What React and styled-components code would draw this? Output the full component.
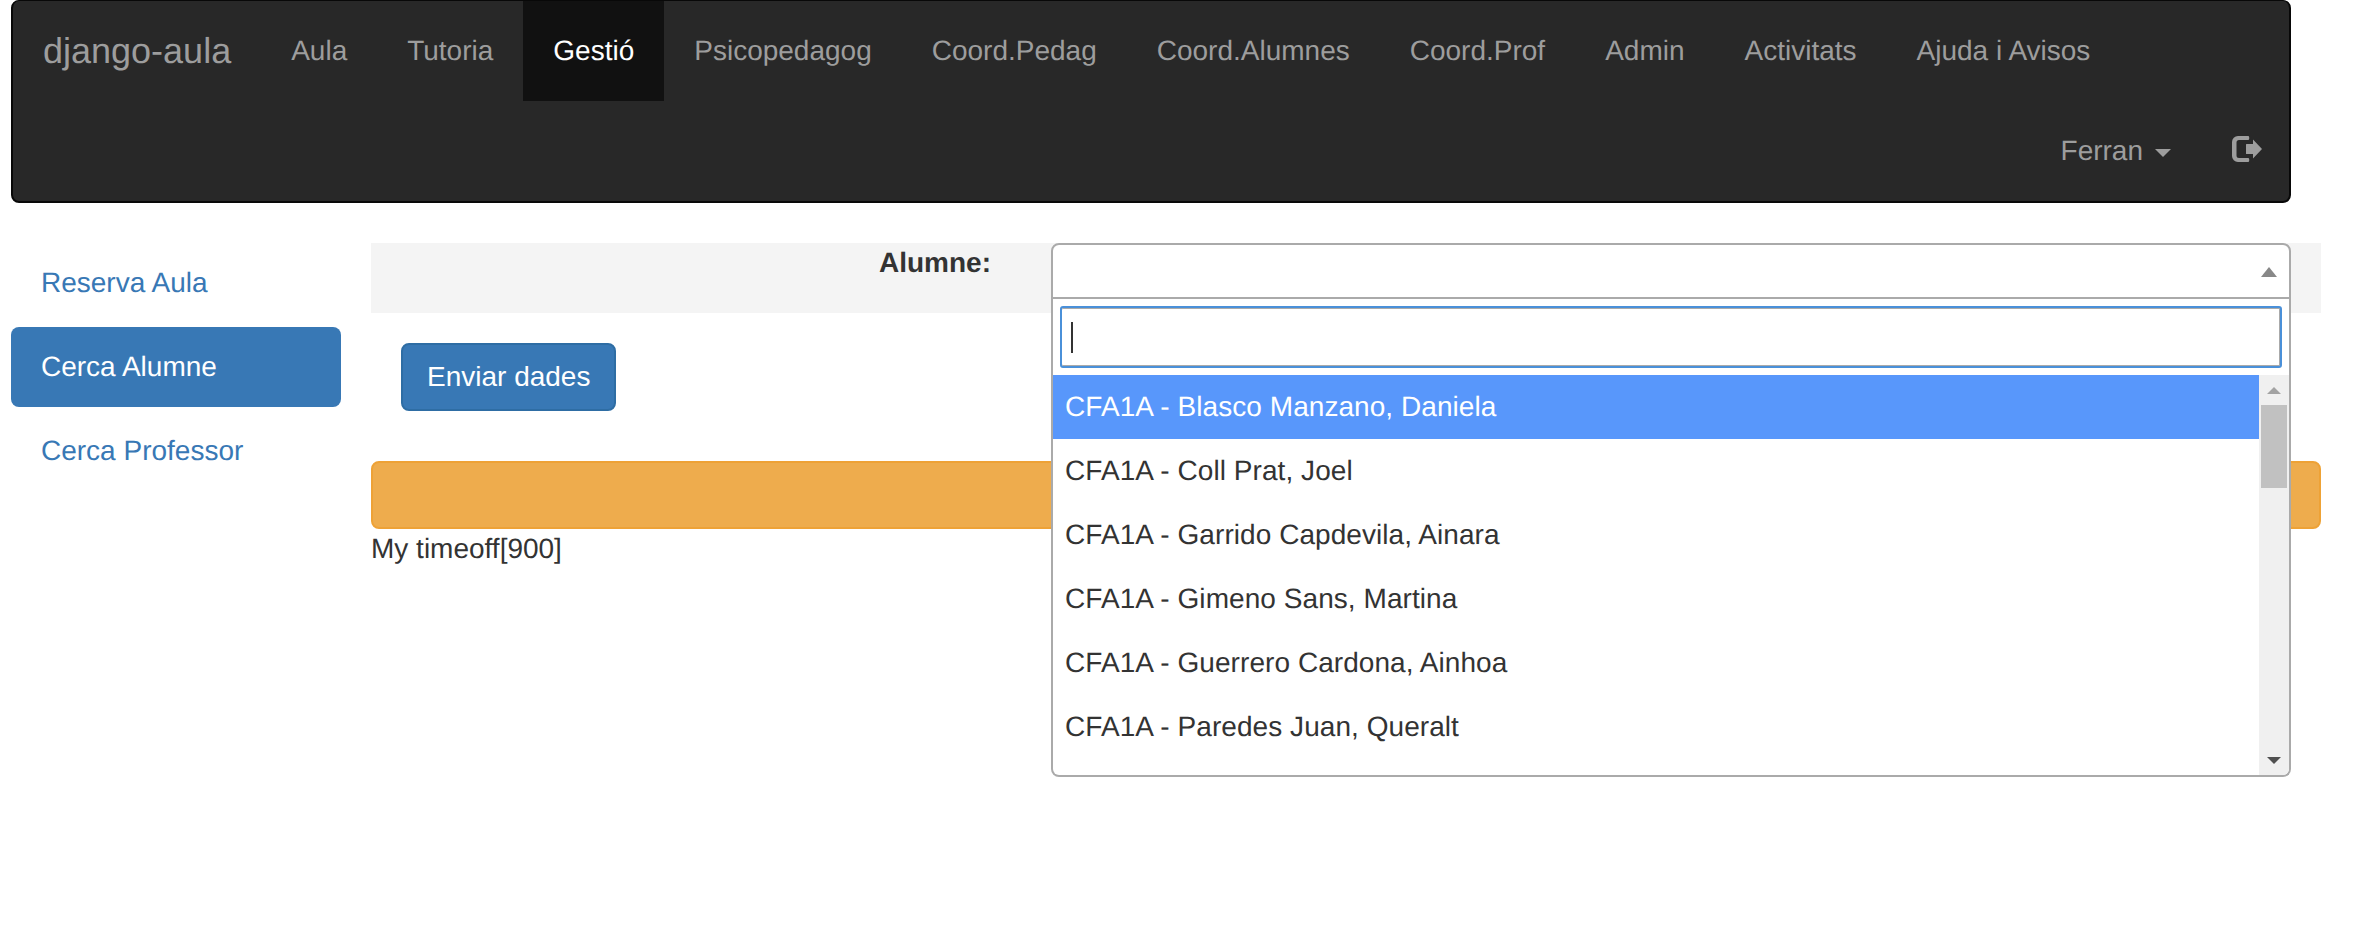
import React from "react";
import styled, { createGlobalStyle } from "styled-components";

const menu = ["Aula", "Tutoria", "Gestió", "Psicopedagog", "Coord.Pedag", "Coord.Alumnes", "Coord.Prof", "Admin", "Activitats", "Ajuda i Avisos"];
const sideLinks = ["Reserva Aula", "Cerca Alumne", "Cerca Professor"];
const students = [
  "CFA1A - Blasco Manzano, Daniela",
  "CFA1A - Coll Prat, Joel",
  "CFA1A - Garrido Capdevila, Ainara",
  "CFA1A - Gimeno Sans, Martina",
  "CFA1A - Guerrero Cardona, Ainhoa",
  "CFA1A - Paredes Juan, Queralt",
];

export default function App() {
  return (
    <Page>
      <GlobalStyle />
      <Navbar>
        <Brand>django-aula</Brand>
        {menu.map((item) => (
          <NavLink key={item} $active={item === "Gestió"}>
            {item}
          </NavLink>
        ))}
        <NavRight>
          <UserLink>
            Ferran
            <Caret />
          </UserLink>
          <LogoutLink>
            <LogoutIcon viewBox="0 0 30 26">
              <path d="M16 0H6a6 6 0 0 0-6 6v14a6 6 0 0 0 6 6h10a1.200 1.200 0 0 0 1.200-1.200v-1.600A1.200 1.200 0 0 0 16 22H7a2.500 2.500 0 0 1-2.500-2.500v-13A2.500 2.500 0 0 1 7 4h9a1.200 1.200 0 0 0 1.200-1.200V1.200A1.200 1.200 0 0 0 16 0Z" />
              <path d="M21 3.500 30 13l-9 9.500V18h-6.500a.5.5 0 0 1-.5-.5v-9a.5.5 0 0 1 .5-.5H21Z" />
            </LogoutIcon>
          </LogoutLink>
        </NavRight>
      </Navbar>

      <Columns>
        <Sidebar>
          {sideLinks.map((link) => (
            <SideLink key={link} $active={link === "Cerca Alumne"}>
              {link}
            </SideLink>
          ))}
        </Sidebar>

        <Main>
          <FormRow>
            <FieldLabel>Alumne:</FieldLabel>
            <SelectCol>
              <SelectBox>
                <SelectArrow />
              </SelectBox>
              <Dropdown>
                <SearchWrap>
                  <SearchField>
                    <TextCaret />
                  </SearchField>
                </SearchWrap>
                <ListWrap>
                  <Options>
                    {students.map((name, i) => (
                      <Option key={name} $highlighted={i === 0}>
                        {name}
                      </Option>
                    ))}
                  </Options>
                  <ScrollTrack>
                    <ScrollButton>
                      <ArrowUp />
                    </ScrollButton>
                    <ScrollThumb />
                    <ScrollButton $bottom>
                      <ArrowDown />
                    </ScrollButton>
                  </ScrollTrack>
                </ListWrap>
              </Dropdown>
            </SelectCol>
          </FormRow>
          <SubmitButton>Enviar dades</SubmitButton>
          <WarningBar />
          <Note>My timeoff[900]</Note>
        </Main>
      </Columns>
    </Page>
  );
}

const GlobalStyle = createGlobalStyle`
  * {
    box-sizing: border-box;
  }
  html,
  body {
    margin: 0;
    background: #fff;
  }
  body {
    font-family: "Liberation Sans", Arial, sans-serif;
    font-size: 28px;
    line-height: 40px;
    color: #333;
    text-rendering: geometricPrecision;
  }
`;

const Page = styled.div`
  width: 2367px;
  min-height: 932px;
  padding: 0 46px 0 11px;
  overflow: hidden;
`;

const Navbar = styled.nav`
  display: flex;
  flex-wrap: wrap;
  width: 2280px;
  height: 203px;
  background: #282828;
  border: 2px solid #080808;
  border-top-width: 1px;
  border-radius: 8px;
`;

const Brand = styled.a`
  height: 100px;
  padding: 30px;
  font-size: 36px;
  line-height: 40px;
  color: #9d9d9d;
`;

const NavLink = styled.a`
  display: flex;
  align-items: center;
  height: 100px;
  padding: 30px;
  color: ${(props) => (props.$active ? "#fff" : "#9d9d9d")};
  background: ${(props) => (props.$active ? "#111" : "transparent")};
`;

const NavRight = styled.div`
  display: flex;
  justify-content: flex-end;
  width: 100%;
`;

const UserLink = styled(NavLink)`
  padding-right: 31px;
`;

const LogoutLink = styled(NavLink)`
  padding-right: 27px;
`;

const Caret = styled.span`
  width: 0;
  height: 0;
  margin-left: 12px;
  margin-top: 4px;
  border-top: 8px solid #9d9d9d;
  border-left: 8px solid transparent;
  border-right: 8px solid transparent;
`;

const LogoutIcon = styled.svg`
  width: 30px;
  height: 26px;
  fill: #9d9d9d;
  margin-top: -4px;
`;

const Columns = styled.div`
  display: flex;
  gap: 30px;
  margin-top: 40px;
`;

const Sidebar = styled.div`
  display: flex;
  flex-direction: column;
  gap: 4px;
  width: 330px;
  flex-shrink: 0;
`;

const SideLink = styled.a`
  height: 80px;
  padding: 20px 30px;
  border-radius: 8px;
  color: ${(props) => (props.$active ? "#fff" : "#3878b5")};
  background: ${(props) => (props.$active ? "#3878b5" : "transparent")};
`;

const Main = styled.div`
  flex: 1;
  min-width: 0;
`;

const FormRow = styled.div`
  display: flex;
  height: 70px;
  background: #f4f4f4;
`;

const FieldLabel = styled.label`
  width: 650px;
  padding-right: 30px;
  font-weight: 700;
  text-align: right;
`;

const SelectCol = styled.div`
  position: relative;
  flex: 1;
  margin: 0 30px;
`;

const SelectBox = styled.div`
  position: relative;
  height: 56px;
  background: #fff;
  border: 2px solid #aaa;
  border-radius: 8px 8px 0 0;
`;

const SelectArrow = styled.span`
  position: absolute;
  top: 22px;
  right: 12px;
  width: 0;
  height: 0;
  border-bottom: 10px solid #888;
  border-left: 8px solid transparent;
  border-right: 8px solid transparent;
`;

const Dropdown = styled.div`
  position: absolute;
  top: 56px;
  left: 0;
  right: 0;
  z-index: 10;
  background: #fff;
  border: 2px solid #aaa;
  border-top: 0;
  border-radius: 0 0 8px 8px;
  overflow: hidden;
`;

const SearchWrap = styled.div`
  padding: 7px;
`;

const SearchField = styled.div`
  display: flex;
  align-items: center;
  height: 62px;
  padding-left: 9px;
  border: 2px solid #4a90d9;
  border-radius: 3px;
  box-shadow: inset 0 1px #aaa, inset -1px 0 #aaa, inset 0 -1px #aaa;
`;

const TextCaret = styled.span`
  width: 2px;
  height: 31px;
  background: #333;
`;

const ListWrap = styled.div`
  display: flex;
  height: 400px;
`;

const Options = styled.ul`
  flex: 1;
  min-width: 0;
  margin: 0;
  padding: 0;
  list-style: none;
`;

const Option = styled.li`
  height: 64px;
  padding: 12px;
  letter-spacing: 0.06px;
  color: ${(props) => (props.$highlighted ? "#fff" : "#333")};
  background: ${(props) => (props.$highlighted ? "#5897fb" : "transparent")};
`;

const ScrollTrack = styled.div`
  display: flex;
  flex-direction: column;
  align-items: center;
  width: 30px;
  background: #f0f0f0;
`;

const ScrollButton = styled.div`
  display: flex;
  align-items: center;
  justify-content: center;
  width: 100%;
  height: 30px;
  margin-top: ${(props) => (props.$bottom ? "auto" : "0")};
`;

const ArrowUp = styled.span`
  border-bottom: 7px solid #a3a3a3;
  border-left: 7px solid transparent;
  border-right: 7px solid transparent;
`;

const ArrowDown = styled.span`
  border-top: 7px solid #505050;
  border-left: 7px solid transparent;
  border-right: 7px solid transparent;
`;

const ScrollThumb = styled.div`
  width: 26px;
  height: 83px;
  background: #c1c1c1;
`;

const SubmitButton = styled.button`
  display: block;
  height: 68px;
  margin: 30px 0 0 30px;
  padding: 12px 24px;
  font: inherit;
  color: #fff;
  background: #3878b5;
  border: 2px solid #2e6da4;
  border-radius: 8px;
`;

const WarningBar = styled.div`
  height: 68px;
  margin-top: 50px;
  background: #eeac4d;
  border: 2px solid #eea236;
  border-radius: 8px;
`;

const Note = styled.div`
  color: #333;
`;
